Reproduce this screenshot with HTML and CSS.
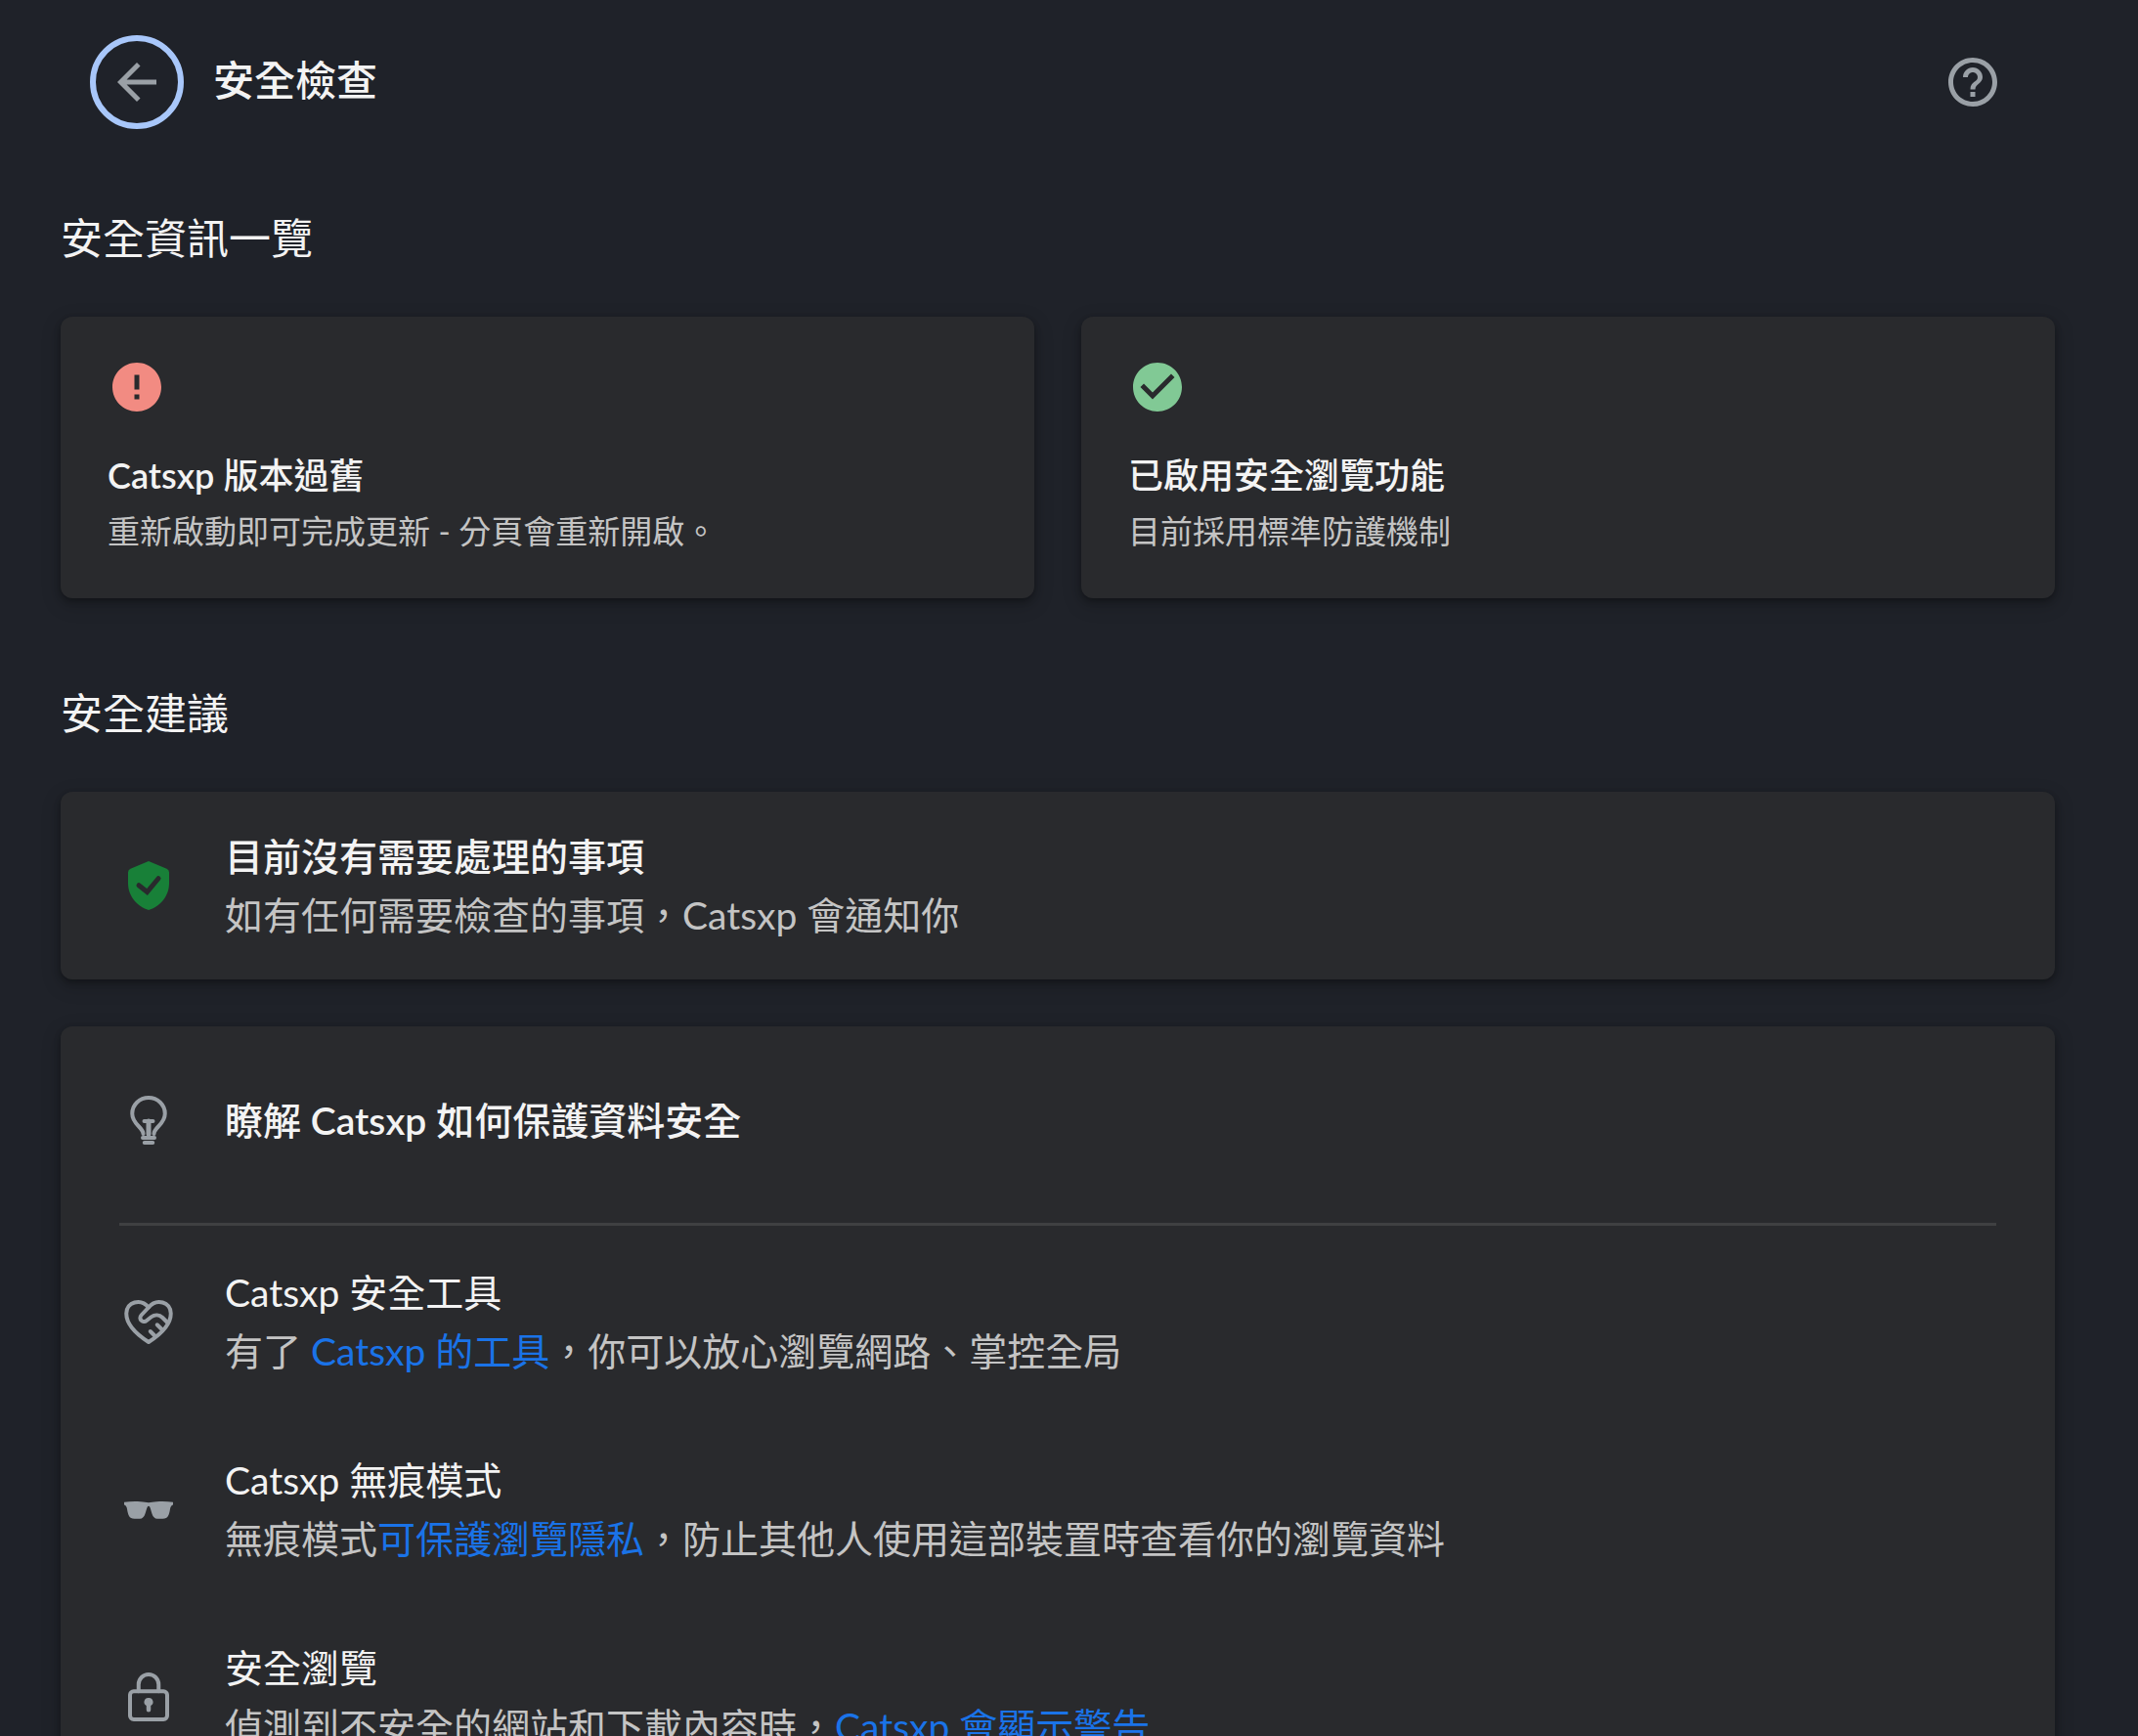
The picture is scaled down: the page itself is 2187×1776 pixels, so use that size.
FILE: index.html
```
<!DOCTYPE html>
<html lang="zh-Hant">
<head>
    <meta charset="UTF-8">
    <title>安全檢查</title>
    <link rel="stylesheet" href="styles.css">
</head>
<body>
<header class="header">
    <button class="back" type="button" aria-label="返回">
        <svg class="icon" viewBox="0 0 24 24"><path d="M20 11H7.830l5.590-5.590L12 4l-8 8 8 8 1.410-1.410L7.830 13H20v-2z"/></svg>
    </button>
    <h1 class="title">安全檢查</h1>
    <button class="help" type="button" aria-label="說明">
        <svg class="icon" viewBox="0 0 24 24"><path d="M11 18h2v-2h-2v2zm1-16C6.480 2 2 6.480 2 12s4.480 10 10 10 10-4.480 10-10S17.520 2 12 2zm0 18c-4.410 0-8-3.590-8-8s3.590-8 8-8 8 3.590 8 8-3.590 8-8 8zm0-14c-2.210 0-4 1.790-4 4h2c0-1.100.9-2 2-2s2 .9 2 2c0 2-3 1.750-3 5h2c0-2.250 3-2.500 3-5 0-2.210-1.790-4-4-4z"/></svg>
    </button>
</header>

<main>
    <h2 class="heading">安全資訊一覽</h2>
    <div class="overview">
        <section class="card status">
            <svg class="icon red" viewBox="0 0 24 24"><path d="M12 2C6.480 2 2 6.480 2 12s4.480 10 10 10 10-4.480 10-10S17.520 2 12 2zm1 15h-2v-2h2v2zm0-4h-2V7h2v6z"/></svg>
            <h3 class="status-title"><b>Catsxp</b> 版本過舊</h3>
            <p class="status-text">重新啟動即可完成更新 - 分頁會重新開啟。</p>
        </section>
        <section class="card status">
            <svg class="icon green" viewBox="0 0 24 24"><path d="M12 2C6.480 2 2 6.480 2 12s4.480 10 10 10 10-4.480 10-10S17.520 2 12 2zm-2 15l-5-5 1.410-1.410L10 14.170l7.590-7.590L19 8l-9 9z"/></svg>
            <h3 class="status-title">已啟用安全瀏覽功能</h3>
            <p class="status-text">目前採用標準防護機制</p>
        </section>
    </div>

    <h2 class="heading">安全建議</h2>
    <section class="card list">
        <div class="row">
            <svg class="icon shield" viewBox="0 0 24 24">
                <path d="M12 2l7.400 3.100Q20.400 5.600 20.400 6.600V11c0 5.500-4 9.800-8.400 11-4.400-1.200-8.400-5.500-8.400-11V6.600q0-1 1-1.500z"/>
                <path class="tick" d="M8 11.900l3.400 2.700 4.600-5.500"/>
            </svg>
            <div>
                <h3 class="row-title strong">目前沒有需要處理的事項</h3>
                <p class="row-text">如有任何需要檢查的事項，Catsxp 會通知你</p>
            </div>
        </div>
    </section>

    <section class="card list">
        <div class="row first">
            <svg class="icon line" viewBox="0 0 24 24">
                <path d="M9.800 17.600c0-2.800-4.500-3.800-4.500-8.300a6.700 6.500 0 0 1 13.400 0c0 4.500-4.500 5.500-4.500 8.300"/>
                <path d="M10.200 12.400h3.600M9.600 19.200h4.800M10.300 21.200h3.400"/>
                <path class="stem" d="M12 12.400v5.200"/>
            </svg>
            <h3 class="row-title strong">瞭解 <b>Catsxp</b> 如何保護資料安全</h3>
        </div>
        <div class="row">
            <svg class="icon line" viewBox="0 0 24 24">
                <path d="M12 20.400C7 17.200 2.900 13.200 2.900 8.700c0-4.800 5.900-6.400 9.100-2.500 3.200-3.900 9.100-2.300 9.100 2.500 0 4.500-4.100 8.500-9.100 11.700z"/>
                <path d="M12 6.200L9 9.400c-1.400 1.500.7 3.500 2.200 2.200l1.900-1.500c1.500-1.100 3.300-.9 4.500.2l2 2M15.500 13.300l2 2M12.700 16l2 2"/>
            </svg>
            <div>
                <h3 class="row-title">Catsxp 安全工具</h3>
                <p class="row-text">有了 <a href="#">Catsxp 的工具</a>，你可以放心瀏覽網路、掌控全局</p>
            </div>
        </div>
        <div class="row">
            <svg class="icon" viewBox="0 0 24 24"><path d="M2 9.100c3-.5 6.500-.4 8.500 0q1.500.3 3 0c2-.4 5.500-.5 8.500 0v1.100q-1 .3-1.200 1.700c-.4 2.400-.8 4-3 4h-2.200c-2.300 0-2.400-3.400-3.100-4.800q-.5-.8-1 0c-.7 1.400-.8 4.800-3.100 4.800H6.200c-2.200 0-2.600-1.600-3-4Q3 10.500 2 10.200z"/></svg>
            <div>
                <h3 class="row-title">Catsxp 無痕模式</h3>
                <p class="row-text">無痕模式<a href="#">可保護瀏覽隱私</a>，防止其他人使用這部裝置時查看你的瀏覽資料</p>
            </div>
        </div>
        <div class="row">
            <svg class="icon line" viewBox="0 0 24 24">
                <rect x="4.400" y="9.700" width="15.200" height="11.500" rx="1.500"/>
                <path d="M7.900 9.700V6.900a4.100 4.100 0 0 1 8.200 0v2.800"/>
                <path class="hole" d="M12 12.400a1.700 1.700 0 0 1 .9 3.200v1.700a.9.900 0 0 1-1.800 0v-1.700a1.700 1.700 0 0 1 .9-3.200z"/>
            </svg>
            <div>
                <h3 class="row-title">安全瀏覽</h3>
                <p class="row-text">偵測到不安全的網站和下載內容時，<a href="#">Catsxp 會顯示警告</a></p>
            </div>
        </div>
    </section>
</main>
</body>
</html>
```
FILE: styles.css
```
body {
    margin: 0;
    padding: 0 85px 0 62px;
    background: #1f2229;
    color: #f3f3f3;
    font-family: Lato, "Noto Sans CJK TC", sans-serif;
    height: 100vh;
    overflow: hidden;
}
h1, h2, h3, p {
    margin: 0;
    font-weight: 400;
}
a {
    color: #1a73e8;
    text-decoration: none;
}
b {
    font-weight: 600;
}
.icon {
    display: block;
    flex: none;
    width: 60px;
    height: 60px;
    fill: #9aa0a6;
}

.header {
    display: flex;
    align-items: center;
    height: 168px;
    margin-bottom: 46px;
    padding: 0 54px 0 30px;
}
.back, .help {
    padding: 0;
    border: 0;
    background: none;
}
.back {
    padding: 12px;
    border: 6px solid #a8c7fa;
    border-radius: 50%;
}
.title {
    flex: 1;
    margin-left: 30px;
    padding-bottom: 4px;
    font-size: 42px;
    line-height: 60px;
    font-weight: 500;
}

.heading {
    margin-bottom: 50px;
    font-size: 43px;
    line-height: 60px;
}
.card {
    border-radius: 12px;
    background: #292a2d;
    box-shadow: 0 3px 6px rgba(0, 0, 0, .3), 0 6px 18px 3px rgba(0, 0, 0, .15);
}

.overview {
    display: grid;
    grid-template-columns: 1fr 1fr;
    gap: 48px;
    margin-bottom: 88px;
}
.status {
    padding: 42px 48px;
}
.status-title {
    margin-top: 30px;
    font-size: 36px;
    line-height: 60px;
    font-weight: 500;
}
.status-text {
    color: #c4c4c4;
    font-size: 33px;
    line-height: 54px;
}
.red {
    fill: #f28b82;
}
.green {
    fill: #81c995;
}

.list {
    margin-bottom: 48px;
    padding: 0 60px;
}
.row {
    display: flex;
    align-items: center;
    gap: 48px;
    height: 192px;
}
.first {
    margin-bottom: 2px;
    padding-bottom: 9px;
    border-bottom: 3px solid #3f4042;
}
.row-title, .row-text {
    font-size: 39px;
    line-height: 60px;
}
.row-text {
    color: #c4c4c4;
}
.strong {
    font-weight: 500;
}

.shield {
    fill: #188038;
}
.tick {
    fill: none;
    stroke: #292a2d;
    stroke-width: 2;
    stroke-linecap: round;
}
.line {
    fill: none;
    stroke: #9aa0a6;
    stroke-width: 1.6;
    stroke-linecap: round;
    stroke-linejoin: round;
}
.stem {
    stroke-width: 2;
}
.hole {
    fill: #9aa0a6;
    stroke: none;
}
```
